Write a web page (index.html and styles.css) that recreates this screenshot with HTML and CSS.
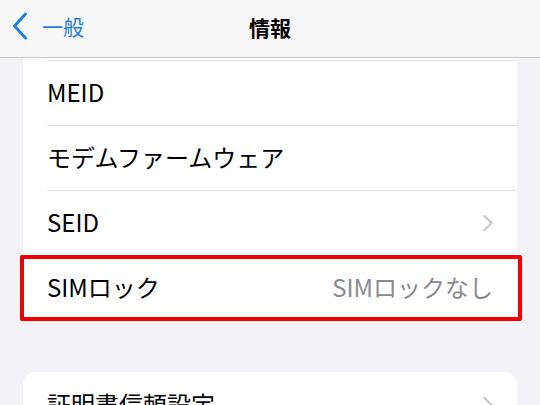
FILE: index.html
```html
<!DOCTYPE html>
<html lang="ja">
<head>
<meta charset="utf-8">
<link rel="stylesheet" href="styles.css">
</head>
<body>
<header class="nav">
  <a class="back">
    <svg class="back-icon" width="16" height="28" viewBox="0 0 16 28"><path d="M13.5 2 L2.5 14 L13.5 26" fill="none" stroke="#1f7fe0" stroke-width="3" stroke-linecap="round" stroke-linejoin="round"/></svg>
    <span class="back-label">一般</span>
  </a>
  <h1 class="title">情報</h1>
</header>
<main class="content">
  <section class="card card-cut">
    <div class="row"><span class="label">MEID</span></div>
    <div class="row"><span class="label">モデムファームウェア</span></div>
    <div class="row"><span class="label">SEID</span>
      <svg class="chev" width="11" height="16" viewBox="0 0 11 16"><path d="M1.5 1 L8.5 8 L1.5 15" fill="none" stroke="#c4c4c7" stroke-width="2" stroke-linecap="round" stroke-linejoin="round"/></svg>
    </div>
    <div class="row row-highlight"><span class="label">SIMロック</span><span class="value">SIMロックなし</span></div>
  </section>
  <section class="card card-round">
    <div class="row row-first"><span class="label">証明書信頼設定</span>
      <svg class="chev" width="11" height="16" viewBox="0 0 11 16"><path d="M1.5 1 L8.5 8 L1.5 15" fill="none" stroke="#c4c4c7" stroke-width="2" stroke-linecap="round" stroke-linejoin="round"/></svg>
    </div>
  </section>
</main>
</body>
</html>
```
FILE: styles.css
```css
html, body {
  margin: 0;
  padding: 0;
}
body {
  width: 540px;
  height: 405px;
  overflow: hidden;
  background: #f2f2f7;
  font-family: "Noto Sans CJK JP", "Liberation Sans", sans-serif;
  color: #000;
}
.nav {
  height: 57px;
  border-bottom: 1px solid #c9c9cc;
  background: #f7f7f7;
  position: relative;
  display: flex;
  align-items: center;
  justify-content: center;
}
.back {
  position: absolute;
  left: 12px;
  top: 12px;
  display: flex;
  align-items: center;
  gap: 14px;
  color: #1f7fe0;
}
.back-label {
  font-size: 21px;
  line-height: 28px;
}
.title {
  margin: 0;
  font-size: 21px;
  font-weight: 700;
  line-height: 28px;
  margin-top: -4px;
}
.content {
  padding: 0 23px;
}
.card {
  background: #fff;
}
.card-cut {
  padding-top: 2px;
}
.card-round {
  margin-top: 52px;
  border-radius: 13px;
}
.row {
  position: relative;
  height: 64px;
  margin-left: 24px;
  padding-right: 24px;
  border-top: 1px solid #e0e0e2;
  display: flex;
  align-items: center;
  justify-content: space-between;
}
.row-first {
  border-top: none;
  height: 65px;
}
.label {
  font-size: 24px;
  line-height: 30px;
  margin-top: -2px;
}
.value {
  font-size: 24px;
  line-height: 30px;
  margin-top: -2px;
  color: #8a8a8e;
}
.chev {
  margin-right: -1px;
}
.row-highlight::after {
  content: "";
  position: absolute;
  left: -27px;
  right: -5px;
  top: -1px;
  bottom: -1px;
  border: 4px solid #f50000;
  border-radius: 2px;
}
```
